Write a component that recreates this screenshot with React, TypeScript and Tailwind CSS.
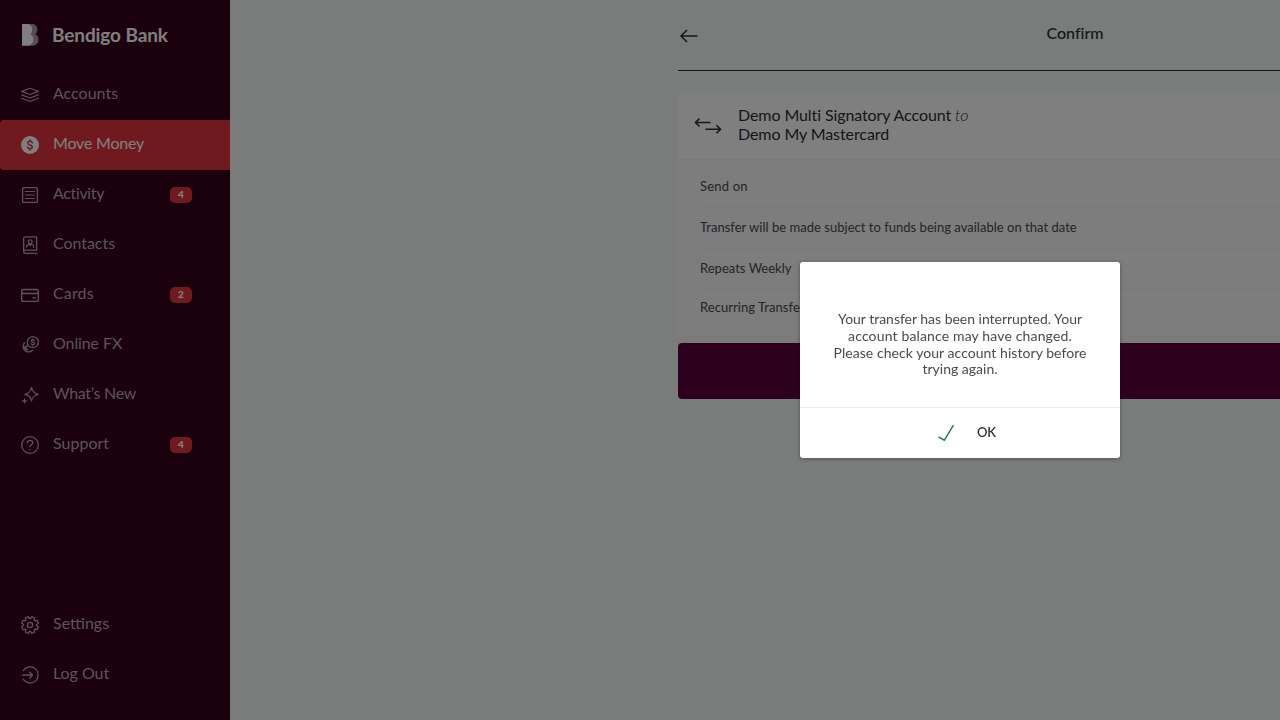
import type { ReactNode } from "react";

function Icon({ children }: { children: ReactNode }) {
  return (
    <svg viewBox="0 0 20 20" className="size-5 shrink-0" fill="none" stroke="currentColor" strokeWidth="1.3" strokeLinecap="round" strokeLinejoin="round">
      {children}
    </svg>
  );
}

// Outline of an eight-toothed gear centred on 10,10.
const gearPoints = Array.from({ length: 8 }, (_, tooth) =>
  [
    [-5, 6.5],
    [5, 6.5],
    [12, 8.5],
    [33, 8.5],
  ].map(([offset, radius]) => {
    const angle = ((tooth * 45 + offset) * Math.PI) / 180;
    return `${(10 + radius * Math.cos(angle)).toFixed(2)},${(10 + radius * Math.sin(angle)).toFixed(2)}`;
  }),
)
  .flat()
  .join(" ");

const icons = {
  accounts: (
    <Icon>
      <g strokeWidth="1.150">
        <path d="M1.700 6.400 10 3.300l8.300 3.100L10 9.500z" />
        <path d="m1.700 9.900 8.300 3.100 8.300-3.100M1.700 13.300l8.300 3.200 8.300-3.200" />
      </g>
    </Icon>
  ),
  money: (
    <Icon>
      <circle cx="10" cy="10" r="9" fill="currentColor" stroke="none" />
      <path className="stroke-[#e1343f]" strokeWidth="1.500" d="M12.300 7.900c-.2-1-1-1.600-2.300-1.600S7.800 7 7.800 8.100c0 2.600 4.500 1.200 4.500 3.700 0 1.200-.9 1.900-2.300 1.900s-2.200-.6-2.400-1.700M10 5v1.300M10 13.700V15" />
    </Icon>
  ),
  activity: (
    <Icon>
      <rect x="2.600" y="2.600" width="14.800" height="14.800" rx="1.200" />
      <path strokeWidth="1.200" d="M5.500 6.500h9M5.500 10h9M5.500 13.500h9" />
    </Icon>
  ),
  contacts: (
    <Icon>
      <path d="M17 18.300H5.600a2 2 0 0 1-2-1.900V3.600a1.700 1.700 0 0 1 1.700-1.700h11.300v13.200H5.300a1.700 1.700 0 0 0-1.700 1.600" />
      <circle cx="10.200" cy="6.700" r="1.900" strokeWidth="1.200" />
      <path strokeWidth="1.200" d="M6.800 12.300v-.8c0-1.200 1-2 2-2.300l1.400 1.300 1.400-1.300c1 .3 2 1.100 2 2.300v.8" />
    </Icon>
  ),
  cards: (
    <Icon>
      <rect x="1.700" y="4.500" width="16.600" height="11.800" rx="1.300" />
      <path d="M1.700 8.500h16.600M12.900 12.900h2.500" />
    </Icon>
  ),
  fx: (
    <Icon>
      <circle cx="12.800" cy="7.200" r="5.500" />
      <path strokeWidth="1.200" d="M14.400 5.900c-.3-.7-.8-1-1.600-1-1 0-1.600.5-1.600 1.200 0 1.700 3.300.8 3.300 2.500 0 .7-.7 1.200-1.700 1.200-.9 0-1.400-.4-1.600-1.100M12.800 3.900v1M12.800 9.800v1" />
      <path d="M4.500 7.800a5.400 5.400 0 1 0 8 7.400" />
      <path strokeWidth="1.200" d="M7.500 10.900c-1.500-.5-2.500.5-2.500 1.900 0 1.500 1.300 2.400 2.800 1.800M4.200 12.200h2.200M4.200 13.500h2.200" />
    </Icon>
  ),
  sparkle: (
    <Icon>
      <path d="M11.500 2.500c.9 4 2.200 5.600 6.600 6.800-4.400 1.200-5.700 2.700-6.600 6.600-.9-4-2.200-5.400-6.500-6.600 4.300-1.200 5.600-2.800 6.500-6.800zM4.500 13.900v4M2.500 15.900h4" />
    </Icon>
  ),
  support: (
    <Icon>
      <circle cx="10" cy="10" r="8.300" />
      <path d="M7.300 7.900C7.300 6.300 8.500 5.300 10 5.300s2.700 1 2.700 2.500c0 1.900-2.700 2-2.700 4M10 14.500v.2" />
    </Icon>
  ),
  settings: (
    <Icon>
      <circle cx="10" cy="10" r="2.600" />
      <polygon points={gearPoints} />
    </Icon>
  ),
  logout: (
    <Icon>
      <path d="M3.300 5.600a8.100 8.100 0 1 1 0 8.800M2.700 10h9.800M9.600 7l3 3-3 3" />
    </Icon>
  ),
};

type Item = { label: string; icon: ReactNode; badge?: number; active?: boolean; tracking: string };

const mainItems: Item[] = [
  { label: "Accounts", icon: icons.accounts, tracking: "tracking-[0px]" },
  { label: "Move Money", icon: icons.money, active: true, tracking: "tracking-[-0.2px]" },
  { label: "Activity", icon: icons.activity, badge: 4, tracking: "tracking-[-0.35px]" },
  { label: "Contacts", icon: icons.contacts, tracking: "tracking-[-0.05px]" },
  { label: "Cards", icon: icons.cards, badge: 2, tracking: "tracking-[0.15px]" },
  { label: "Online FX", icon: icons.fx, tracking: "tracking-[-0.1px]" },
  { label: "What’s New", icon: icons.sparkle, tracking: "tracking-[-0.3px]" },
  { label: "Support", icon: icons.support, badge: 4, tracking: "tracking-[0px]" },
];

const footerItems: Item[] = [
  { label: "Settings", icon: icons.settings, tracking: "tracking-[0px]" },
  { label: "Log Out", icon: icons.logout, tracking: "tracking-[-0.05px]" },
];

function NavItem({ item }: { item: Item }) {
  return (
    <a className={`flex h-[50px] items-center pr-[38px] pl-5 ${item.active ? "rounded-l-[4px] bg-[#e1343f] text-[#fff]" : "text-[#b8a7af]"}`}>
      {item.icon}
      <span className={`-mt-1 ml-[13px] flex-1 text-base whitespace-nowrap ${item.tracking}`}>{item.label}</span>
      {item.badge && (
        <span className="flex h-4 w-[22px] items-center justify-center rounded-[5px] bg-[#e1343f] pb-px text-[10px] font-black text-white">{item.badge}</span>
      )}
    </a>
  );
}

function Sidebar() {
  return (
    <aside className="flex w-[230px] shrink-0 flex-col bg-[#36001a] pb-5">
      <div className="flex h-[70px] items-center pl-[22px]">
        <svg viewBox="0 0 17 22" className="h-[22px] w-[17px]">
          <path fill="#fff" opacity=".6" d="M6 0h4C13.500 0 15.300 2.300 15.300 5.300c0 2-.6 3.700-1.900 4.900 2 1 3.100 2.900 3.100 5.300 0 3.800-2.700 6.200-6 6.200H6z" />
          <path fill="#fff" d="M0 0h4.500c3.600 0 5.700 2.200 5.700 5.300 0 2-.5 3.600-1.600 4.900 1.800 1 2.800 2.900 2.800 5.300 0 3.800-2.600 6.300-6.300 6.300H0z" />
        </svg>
        <span className="ml-[13px] text-[19px] font-bold tracking-[-0.1px] whitespace-nowrap text-white">Bendigo Bank</span>
      </div>
      <nav className="flex flex-1 flex-col">
        {mainItems.map((item) => (
          <NavItem key={item.label} item={item} />
        ))}
      </nav>
      <nav className="flex flex-col">
        {footerItems.map((item) => (
          <NavItem key={item.label} item={item} />
        ))}
      </nav>
    </aside>
  );
}

const rows = [
  { text: "Send on", style: "h-[47px] pt-[6px] tracking-[0.2px]" },
  { text: "Transfer will be made subject to funds being available on that date", style: "h-[41px] border-t pb-px tracking-[0.02px]" },
  { text: "Repeats Weekly", style: "h-10 border-t tracking-[0.01px]" },
  { text: "Recurring Transfer", style: "h-10 border-t pb-px tracking-[0.05px]" },
];

function Confirm() {
  return (
    <main className="flex flex-1 overflow-hidden pl-[448px]">
      <div className="flex w-[794px] shrink-0 flex-col text-[#2a2e30]">
        <header className="flex h-[71px] items-start border-b border-[#26282a]">
          <svg viewBox="0 0 20 16" className="mt-7 ml-px h-4 w-5" fill="none" stroke="currentColor" strokeWidth="1.500">
            <path d="M18.500 8H2M8 2 2 8l6 6" />
          </svg>
          <h1 className="mt-[21px] mr-[21px] flex-1 text-center text-base leading-6 font-medium tracking-[0.01px]">Confirm</h1>
        </header>
        <section className="mt-[22px] flex h-[243px] flex-col rounded-[4px] bg-[#fafafa]">
          <div className="flex h-[67px] rounded-t-[4px] border-b border-[#f2f2f2] bg-white pl-4">
            <svg viewBox="0 0 28 18" className="mt-6 h-[18px] w-7" fill="none" stroke="currentColor" strokeWidth="1.600">
              <path d="M16.500 5.500H1.500M5.500 1.500l-4 4 4 4M11.500 12.200h15M22.500 8.200l4 4-4 4" />
            </svg>
            <p className="mt-3 ml-4 text-base leading-[19px] tracking-[-0.09px]">
              Demo Multi Signatory Account <em className="font-light">to</em>
              <br />
              Demo My Mastercard
            </p>
          </div>
          <div className="flex flex-col pl-[22px] text-[13px] text-[#464c4e]">
            {rows.map((row) => (
              <div key={row.text} className={`flex items-center border-[#f3f3f3] whitespace-nowrap ${row.style}`}>
                {row.text}
              </div>
            ))}
          </div>
        </section>
        <button className="mt-[7px] h-14 rounded-[4px] bg-[#5b003b]" />
      </div>
    </main>
  );
}

function Dialog() {
  return (
    <div className="fixed inset-0 flex items-start bg-black/50 pt-[262px] pl-[800px]">
      <div className="flex h-[196px] w-[320px] flex-col rounded-[3px] bg-white text-[#4a4a4a] shadow-[0_1px_4px_rgba(0,0,0,0.35)]">
        <p className="flex-1 pt-[49px] text-center text-sm leading-[16.800px] whitespace-nowrap">
          <span className="tracking-[-0.02px]">Your transfer has been interrupted. Your</span>
          <br />
          <span className="tracking-[0.15px]">account balance may have changed.</span>
          <br />
          <span className="tracking-[0.05px]">Please check your account history before</span>
          <br />
          trying again.
        </p>
        <button className="flex h-[51px] items-center border-t border-[#ededed] pl-[137px]">
          <svg viewBox="0 0 18 18" className="size-[18px] shrink-0" fill="none" stroke="#15854a" strokeWidth="1.400">
            <path d="M1.500 12.800 7.300 16.200 16.500 1.200" />
          </svg>
          <span className="ml-[22px] text-[13px] font-semibold tracking-[-0.3px] text-[#333]">OK</span>
        </button>
      </div>
    </div>
  );
}

export default function App() {
  return (
    <div className="flex h-screen w-screen overflow-hidden bg-[#f4f8f6] font-[Lato,sans-serif]">
      <Sidebar />
      <Confirm />
      <Dialog />
    </div>
  );
}
